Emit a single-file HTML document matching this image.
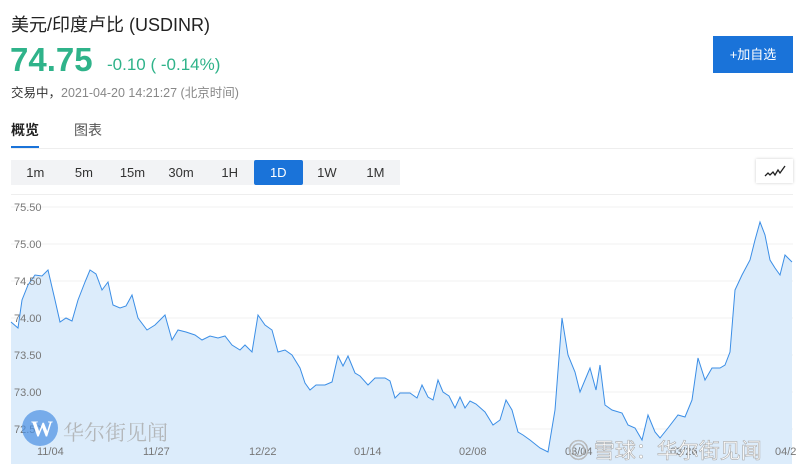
<!DOCTYPE html>
<html><head><meta charset="utf-8"><style>
*{margin:0;padding:0;box-sizing:border-box}
body{width:800px;height:475px;background:#fff;font-family:"Liberation Sans","Noto Sans CJK SC",sans-serif;position:relative;overflow:hidden;color:#333}
.a{position:absolute;white-space:nowrap}
.tabs{position:absolute;left:11px;top:160px;height:25px;width:389px;background:#f2f3f5;display:flex}
.tabs div{width:48.6px;text-align:center;line-height:25px;font-size:13px;color:#333}
.tabs .on{background:#1a73d9;color:#fff;border-radius:2px}
</style></head><body>
<div class="a" style="left:11px;top:11px;font-size:18px;color:#222">美元/印度卢比 (USDINR)</div>
<div class="a" style="left:10px;top:41px;font-size:33px;font-weight:bold;color:#2fb38a">74.75</div>
<div class="a" style="left:107px;top:55px;font-size:17px;color:#2fb38a">-0.10 ( -0.14%)</div>
<div class="a" style="left:11px;top:82px;font-size:12.5px;color:#333">交易中，<span style="color:#888">2021-04-20 14:21:27 (北京时间)</span></div>
<div class="a" style="left:713px;top:36px;width:80px;height:37px;background:#1a73d9;color:#fff;font-size:13px;text-align:center;line-height:37px">+加自选</div>
<div class="a" style="left:11px;top:120px;font-size:14px;font-weight:bold;color:#222">概览</div>
<div class="a" style="left:74px;top:120px;font-size:14px;color:#555">图表</div>
<div class="a" style="left:11px;top:146px;width:28px;height:3px;background:#1a73d9"></div>
<div class="a" style="left:11px;top:148px;width:782px;height:1px;background:#eee"></div>
<div class="tabs"><div>1m</div><div>5m</div><div>15m</div><div>30m</div><div>1H</div><div class="on">1D</div><div>1W</div><div>1M</div></div>
<div class="a" style="left:756px;top:159px;width:37px;height:24px;background:#fff;box-shadow:0 0 3px rgba(0,0,0,.2)">
<svg width="37" height="24"><path d="M9 17 L12 14 L14 16 L17 13 L19 16 L22 11 L24 14 L29 7" fill="none" stroke="#222" stroke-width="1.3"/></svg></div>
<div class="a" style="left:11px;top:194px;width:782px;height:1px;background:#eee"></div>
<svg class="a" style="left:0;top:196px" width="800" height="270">
<g stroke="#f0f0f0"><line x1="11" y1="11" x2="793" y2="11"/><line x1="11" y1="48" x2="793" y2="48"/><line x1="11" y1="85" x2="793" y2="85"/><line x1="11" y1="122" x2="793" y2="122"/><line x1="11" y1="159" x2="793" y2="159"/><line x1="11" y1="196" x2="793" y2="196"/><line x1="11" y1="233" x2="793" y2="233"/></g>
<g transform="translate(0,-196)">
<path id="p" d="M11,322 L18,328 L22,300 L28,285 L35,275 L42,276 L48,270 L55,300 L60,322 L66,318 L72,321 L78,300 L85,282 L90,270 L96,274 L102,290 L108,282 L113,305 L120,308 L126,306 L132,295 L138,318 L147,330 L155,325 L165,315 L172,340 L178,330 L186,332 L195,335 L202,340 L210,336 L218,338 L225,336 L232,345 L240,350 L245,345 L252,352 L258,315 L265,325 L272,330 L278,352 L285,350 L292,355 L300,368 L305,383 L310,390 L316,385 L325,385 L332,382 L338,356 L343,366 L348,356 L355,373 L360,376 L368,385 L375,378 L385,378 L390,381 L395,398 L400,393 L410,393 L417,398 L422,385 L428,397 L433,400 L438,380 L443,392 L449,396 L455,408 L460,397 L465,408 L470,401 L476,404 L485,412 L493,425 L500,420 L506,400 L512,410 L518,432 L523,435 L530,440 L540,448 L548,452 L555,410 L562,318 L568,355 L575,372 L580,392 L585,380 L590,368 L596,390 L600,365 L605,405 L612,410 L622,413 L628,425 L635,428 L642,440 L648,415 L655,432 L660,438 L668,428 L678,415 L685,417 L692,400 L698,358 L705,380 L712,368 L720,368 L725,365 L730,352 L735,290 L742,275 L750,260 L755,240 L760,222 L765,235 L770,260 L775,268 L780,275 L785,255 L792,262" fill="none"/>
<path d="M11,322 L18,328 L22,300 L28,285 L35,275 L42,276 L48,270 L55,300 L60,322 L66,318 L72,321 L78,300 L85,282 L90,270 L96,274 L102,290 L108,282 L113,305 L120,308 L126,306 L132,295 L138,318 L147,330 L155,325 L165,315 L172,340 L178,330 L186,332 L195,335 L202,340 L210,336 L218,338 L225,336 L232,345 L240,350 L245,345 L252,352 L258,315 L265,325 L272,330 L278,352 L285,350 L292,355 L300,368 L305,383 L310,390 L316,385 L325,385 L332,382 L338,356 L343,366 L348,356 L355,373 L360,376 L368,385 L375,378 L385,378 L390,381 L395,398 L400,393 L410,393 L417,398 L422,385 L428,397 L433,400 L438,380 L443,392 L449,396 L455,408 L460,397 L465,408 L470,401 L476,404 L485,412 L493,425 L500,420 L506,400 L512,410 L518,432 L523,435 L530,440 L540,448 L548,452 L555,410 L562,318 L568,355 L575,372 L580,392 L585,380 L590,368 L596,390 L600,365 L605,405 L612,410 L622,413 L628,425 L635,428 L642,440 L648,415 L655,432 L660,438 L668,428 L678,415 L685,417 L692,400 L698,358 L705,380 L712,368 L720,368 L725,365 L730,352 L735,290 L742,275 L750,260 L755,240 L760,222 L765,235 L770,260 L775,268 L780,275 L785,255 L792,262 L792,464 L11,464 Z" fill="#dcecfb"/>
<use href="#p" stroke="#3b8ee6" stroke-width="1"/>
</g>
<g font-size="11" fill="#777" font-family="Liberation Sans,sans-serif">
<text x="14" y="15">75.50</text><text x="14" y="52">75.00</text><text x="14" y="89">74.50</text><text x="14" y="126">74.00</text><text x="14" y="163">73.50</text><text x="14" y="200">73.00</text><text x="14" y="237">72.50</text>
<text x="37" y="259">11/04</text><text x="143" y="259">11/27</text><text x="249" y="259">12/22</text><text x="354" y="259">01/14</text><text x="459" y="259">02/08</text><text x="565" y="259">03/04</text><text x="670" y="259">03/26</text><text x="775" y="259">04/2</text>
</g>
<circle cx="40" cy="232" r="18" fill="#4a90e2" opacity=".7"/>
<text x="31" y="240" font-size="22" fill="#fff" font-family="Liberation Serif,serif" font-weight="bold">W</text>
<text x="63" y="244" font-size="21" fill="#aaa" opacity=".8" font-family="Noto Serif CJK SC,serif">华尔街见闻</text>
<text x="568" y="262" font-size="21" fill="#fff" stroke="#aaa" stroke-width=".6" font-family="Noto Sans CJK SC,sans-serif">◎ 雪球：华尔街见闻</text>
</svg>
</body></html>
